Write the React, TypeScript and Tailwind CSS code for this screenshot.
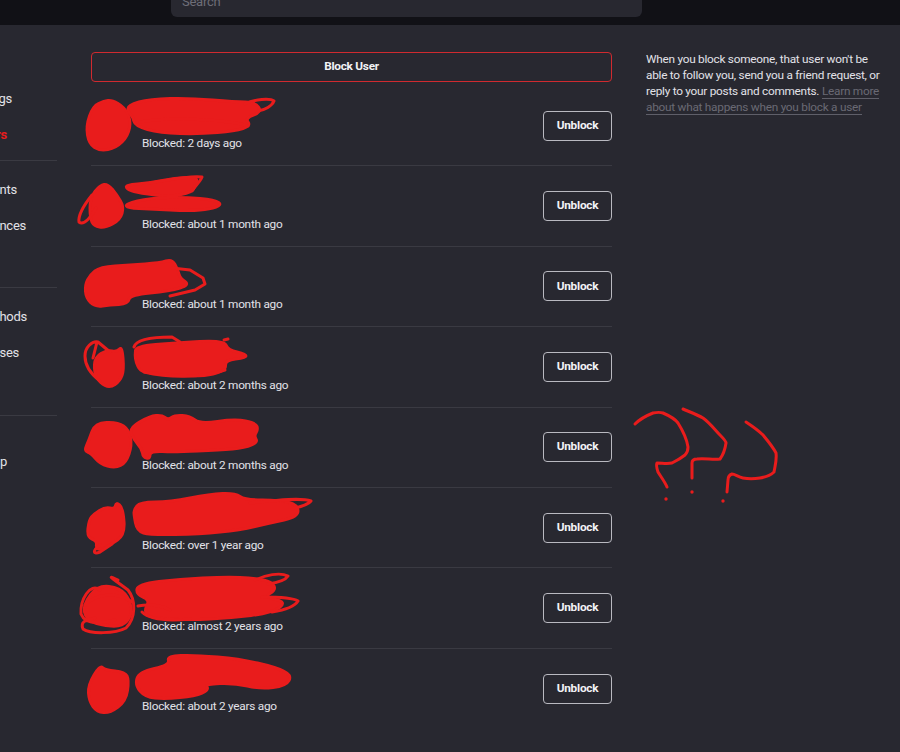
const blocked = [
  "2 days ago",
  "about 1 month ago",
  "about 1 month ago",
  "about 2 months ago",
  "about 2 months ago",
  "over 1 year ago",
  "almost 2 years ago",
  "about 2 years ago",
];

// the red marker scribbles drawn over the screenshot
const blobs = [
  "93 106 104 101 112 100 124 107 131 120 128 136 116 148 100 151 89 144 86 126",
  "128 105 150 99 190 98 235 102 255 102 262 112 245 118 251 126 235 131 200 134 160 133 135 126 133 117 128 112",
  "125 185 150 183 175 178 198 177 195 186 192 192 170 197 140 193 128 190",
  "125 204 150 198 185 197 215 200 222 205 210 209 190 211 150 209 128 208",
  "100 185 108 184 117 195 124 207 120 220 105 228 94 226 90 218 90 198",
  "100 267 130 265 160 263 172 259 178 270 180 278 190 285 170 291 130 295 128 304 110 305 95 307 86 298 85 285 90 275",
  "95 357 107 350 117 352 122 346 124 370 120 381 110 388 100 383 94 372",
  "136 346 175 343 224 340 228 350 246 354 246 358 225 360 226 371 200 377 150 373 140 371 136 362 135 355",
  "95 423 118 422 129 430 132 445 126 463 115 468 100 464 91 453 84 451 89 440",
  "129 428 150 416 162 415 168 420 175 415 190 416 200 424 235 419 256 423 258 430 254 436 258 442 245 448 220 450 175 452 150 451 150 459 143 457 142 449 134 440",
  "94 514 105 507 115 509 116 502 123 508 125 535 110 545 100 550 96 548 97 541 87 537 89 520",
  "140 502 170 502 210 494 235 493 245 500 280 500 298 505 298 517 270 523 240 530 200 534 150 535 137 531 134 515 134 510",
  "98 585 120 588 130 600 132 615 122 627 100 625 86 619 83 605",
  "138 584 180 579 225 577 255 578 272 582 276 590 264 597 287 602 272 613 230 618 190 620 150 618 144 611 150 600 136 594",
  "100 665 105 670 125 672 129 680 126 701 110 713 97 712 89 701 88 685",
  "139 672 170 665 167 656 195 655 240 659 275 667 292 675 286 686 260 689 235 683 205 684 209 690 195 696 165 699 145 697 135 685",
];

const loops = [
  "M92 195 C84 205 78 215 79 222 C84 226 92 216 96 208",
  "M172 268 L190 270 L203 278 L205 284 L195 290 L170 296",
  "M100 381 C92 375 85 366 85 356 C85 347 92 341 98 342 L110 352 M97 342 L93 358",
  "M134 347 C136 340 150 337 172 337 L180 342",
  "M245 104 C255 99 270 98 274 101 C272 106 265 110 258 111 M140 122 C170 116 230 120 248 126",
  "M150 183 C170 180 190 175 202 177 C200 182 195 186 192 191",
  "M144 372 C170 378 200 378 225 370 M224 340 L228 339",
  "M250 503 C270 501 300 497 311 501 C308 505 300 507 292 509",
  "M100 545 C92 551 93 555 100 552 L112 544",
  "M100 590 C90 582 80 600 81 614 C84 622 95 625 115 620 M118 580 C105 574 112 578 128 590 C136 600 136 618 126 628 C115 634 90 634 83 629 C80 622 85 620 95 618",
  "M85 605 C95 595 115 590 132 602",
  "M255 580 C265 575 280 572 288 576 C285 581 275 583 268 584 M262 597 C275 597 292 597 298 601 C295 606 285 610 272 612",
  "M138 606 C150 604 160 605 170 610 M142 612 C150 620 170 621 190 619",
];

const marks = [
  "M635 424 C640 419 648 415 653 413 C658 412 660 412 663 413 C670 416 675 419 678 423 C683 431 687 440 688 447 C688 451 687 453 685 455 C680 459 676 461 672 463 C667 464 662 463 657 463 C656 465 657 469 658 472 C661 477 665 482 667 487",
  "M683 409 C690 412 698 415 703 418 C710 423 715 430 720 435 C724 439 726 441 726 443 C725 450 723 455 720 459 C713 460 705 458 697 459 C693 459 692 461 692 463 L692 478",
  "M746 422 C752 426 758 430 763 435 C768 441 773 447 776 453 C777 460 775 466 774 472 C770 476 766 477 760 478 C754 479 748 479 743 478 C738 477 735 474 732 474 C729 475 728 478 728 480 L727 492",
];

const dots = [
  [666, 499],
  [692, 492],
  [723, 501],
];

// rounds a list of points into a closed hand-drawn outline
function smooth(points: string) {
  const n = points.split(" ").map(Number);
  const pts: number[][] = [];
  for (let i = 0; i < n.length; i += 2) pts.push([n[i], n[i + 1]]);
  const mid = (a: number[], b: number[]) => `${(a[0] + b[0]) / 2} ${(a[1] + b[1]) / 2}`;
  let d = `M${mid(pts[pts.length - 1], pts[0])}`;
  pts.forEach((p, i) => {
    d += ` Q${p[0]} ${p[1]} ${mid(p, pts[(i + 1) % pts.length])}`;
  });
  return d + "Z";
}

export default function App() {
  return (
    <div className="relative h-[752px] overflow-hidden bg-[#282830] font-['Roboto',sans-serif] text-[11.8px] tracking-[-0.25px] text-[#e2e2e8]">
      <div className="h-[25px] overflow-hidden bg-[#111116] pl-[171px]">
        <div className="-mt-[17px] flex h-[34px] w-[471px] items-center rounded-md bg-[#282830] px-[11px] pt-[4px] text-[13px] text-[#6e6e78]">
          Search
        </div>
      </div>

      <div className="flex">
        <aside className="w-[57px] shrink-0 overflow-hidden pt-[56px] text-[13px] leading-[36px]">
          <div className="border-b border-[#3a3a42] pb-[7px]">
            <div className="flex w-[12px] justify-end whitespace-nowrap">Account Settings</div>
            <div className="flex w-[7px] justify-end whitespace-nowrap font-bold text-[#e91c1c]">Blocked Users</div>
          </div>
          <div className="border-b border-[#3a3a42] pb-[43px] pt-[11px]">
            <div className="flex w-[17px] justify-end whitespace-nowrap">Linked Accounts</div>
            <div className="flex w-[26px] justify-end whitespace-nowrap">Email Preferences</div>
          </div>
          <div className="border-b border-[#3a3a42] pb-[44px] pt-[11px]">
            <div className="flex w-[27px] justify-end whitespace-nowrap">Payment Methods</div>
            <div className="flex w-[19px] justify-end whitespace-nowrap">Addresses</div>
          </div>
          <div className="pt-[28px]">
            <div className="flex w-[7px] justify-end whitespace-nowrap">Help</div>
          </div>
        </aside>

        <main className="ml-[34px] w-[521px] shrink-0 pt-[27px]">
          <button className="h-[30px] w-full rounded border border-[#d02a2f] text-[11.8px] font-bold text-[#f2f2f5]">
            Block User
          </button>
          <div className="mt-[3.85px]">
            {blocked.map((when, i) => (
              <div
                key={i}
                className="flex h-[80.45px] items-center justify-between border-b border-[#3a3a42] pl-[51px] last:border-transparent"
              >
                <span className="mt-[37px]">Blocked: {when}</span>
                <button className="h-[30px] w-[69px] rounded border border-[#b9b9c0] text-[11.8px] font-bold text-[#f2f2f5]">
                  Unblock
                </button>
              </div>
            ))}
          </div>
        </main>

        <aside className="ml-[34px] w-[236px] shrink-0 pt-[26px] leading-[16px]">
          When you block someone, that user won't be able to follow you, send you a friend request, or
          reply to your posts and comments.{" "}
          <a className="border-b border-[#5f5f69] text-[#6a6a74]">
            Learn more about what happens when you block a user
          </a>
        </aside>
      </div>

      <svg
        className="pointer-events-none absolute left-0 top-0"
        width="900"
        height="752"
        viewBox="0 0 900 752"
        fill="none"
        strokeLinecap="round"
        strokeLinejoin="round"
      >
        {blobs.map((pts, i) => (
          <path key={i} d={smooth(pts)} fill="#e91c1c" stroke="#e91c1c" strokeWidth="3" />
        ))}
        {loops.map((d, i) => (
          <path key={i} d={d} stroke="#e91c1c" strokeWidth="3" />
        ))}
        {marks.map((d, i) => (
          <path key={i} d={d} stroke="#e91c1c" strokeWidth="3" />
        ))}
        {dots.map(([x, y], i) => (
          <circle key={i} cx={x} cy={y} r="1.7" fill="#e91c1c" />
        ))}
      </svg>
    </div>
  );
}
